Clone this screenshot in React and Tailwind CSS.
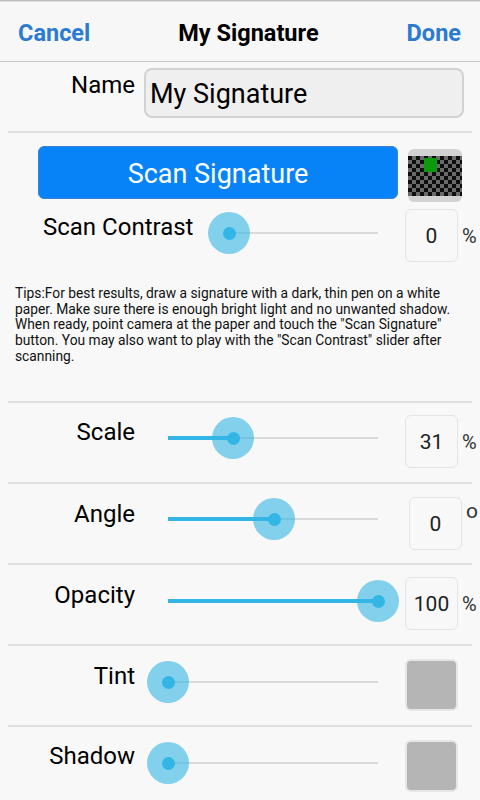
import React from "react";

function Slider({ w, value, fill, cls }) {
  const range = w - 42;
  const x = 21 + range * value;
  return (
    <div className={"relative h-[42px] shrink-0 " + cls}>
      <div className="absolute top-[20px] left-[21px] right-[21px] h-[2px] bg-[#dadada]" />
      {fill && (
        <div
          className="absolute top-[19px] left-[21px] h-[4px] bg-[#33b5e5]"
          style={{ width: x - 21 }}
        />
      )}
      <div
        className="absolute top-0 h-[42px] w-[42px] rounded-full bg-[#33b5e5]/60"
        style={{ left: x - 21 }}
      />
      <div
        className="absolute top-[14.5px] h-[13px] w-[13px] rounded-full bg-[#33b5e5]"
        style={{ left: x - 6.5 }}
      />
    </div>
  );
}

function Divider() {
  return <div className="mx-[8px] h-[2px] bg-[#e0e0e0]" />;
}

function ValueBox({ value }) {
  return (
    <div className="flex h-[53px] w-[53px] items-center justify-center rounded-[6px] border border-[#e4e4e4] pt-[1px] text-[21px] leading-none text-[#222]">
      {value}
    </div>
  );
}

function Swatch() {
  return (
    <div className="h-[52px] w-[53px] rounded-[6px] border-2 border-[#e6e6e6] bg-[#b5b5b5]" />
  );
}

function Checker() {
  return (
    <div className="ml-[10px] mt-[3px] flex h-[53px] w-[54px] flex-col justify-center rounded-[6px] bg-[#d2d2d2]">
      <svg width="54" height="40" viewBox="0 0 54 40" className="block">
        <defs>
          <pattern id="chk" width="8" height="8" patternUnits="userSpaceOnUse">
            <rect width="8" height="8" fill="#0d0d0d" />
            <rect x="4" y="0" width="4" height="4" fill="#6a6a6a" />
            <rect x="0" y="4" width="4" height="4" fill="#6a6a6a" />
          </pattern>
        </defs>
        <rect width="54" height="40" fill="url(#chk)" />
        <rect x="16" y="2" width="13" height="14" fill="#0b9a0b" />
      </svg>
    </div>
  );
}

export default function App() {
  return (
    <div className="h-[800px] w-[480px] overflow-hidden bg-[#f8f8f8] font-['Roboto',sans-serif] text-[#111]">
      {/* header */}
      <div className="h-[1px] bg-[#bcbcbc]" />
      <div className="h-[1px] bg-[#e0e0e0]" />
      <div className="flex h-[60px] items-center justify-between border-b border-[#c8c8c8] bg-[#f7f7f7] px-[18px] pt-[4px] pr-[19px] text-[23.5px] font-bold">
        <span className="text-[#2b7bd3]">Cancel</span>
        <span className="text-[23.5px] text-black">My Signature</span>
        <span className="text-[#2b7bd3]">Done</span>
      </div>

      {/* name row */}
      <div className="flex h-[69px] items-start">
        <div className="mt-[9px] w-[135px] text-right text-[24px] leading-[28px] text-black">Name</div>
        <div className="ml-[9px] mt-[6px] flex h-[50px] w-[320px] items-center rounded-[8px] border-2 border-[#d2d2d2] bg-[#efefef] pl-[4px] pt-[3px] text-[27px] leading-none text-black">
          My Signature
        </div>
      </div>
      <Divider />

      {/* scan section */}
      <div className="h-[268px] pt-[13px]">
        <div className="flex items-start">
          <div className="ml-[38px] flex h-[53px] w-[360px] items-center justify-center rounded-[6px] border border-[#3b82d4] bg-[#0883f7] pt-[3px] text-[27px] leading-none text-white">
            Scan Signature
          </div>
          <Checker />
        </div>
        <div className="mt-[7px] flex items-start">
          <div className="mt-[4px] w-[208px] pl-[43px] text-[24px] leading-[28px] text-black">Scan Contrast</div>
          <Slider cls="w-[191px] mt-[3px]" w={191} value={0} fill={false} />
          <div className="ml-[6px] flex items-center">
            <ValueBox value="0" />
            <span className="ml-[4px] text-[20px] text-[#333]">%</span>
          </div>
        </div>
        <div className="mt-[24px] whitespace-nowrap px-[15px] text-[13.8px] leading-[15.7px] text-[#111]">
          Tips:For best results, draw a signature with a dark, thin pen on a white
          <br />
          paper. Make sure there is enough bright light and no unwanted shadow.
          <br />
          When ready, point camera at the paper and touch the "Scan Signature"
          <br />
          button. You may also want to play with the "Scan Contrast" slider after
          <br />
          scanning.
        </div>
      </div>
      <Divider />

      {/* Scale */}
      <div className="flex h-[79px] items-start">
        <div className="mt-[15px] w-[135px] text-right text-[24px] leading-[28px] text-black">Scale</div>
        <Slider cls="ml-[12px] mt-[14px] w-[252px]" w={252} value={0.31} fill />
        <div className="ml-[6px] mt-[12px] flex items-center">
          <ValueBox value="31" />
          <span className="ml-[4px] text-[20px] text-[#333]">%</span>
        </div>
      </div>
      <Divider />

      {/* Angle */}
      <div className="flex h-[79px] items-start">
        <div className="mt-[16px] w-[135px] text-right text-[24px] leading-[28px] text-black">Angle</div>
        <Slider cls="ml-[12px] mt-[14px] w-[252px]" w={252} value={0.505} fill />
        <div className="ml-[10px] mt-[13px] flex items-start">
          <ValueBox value="0" />
          <span className="ml-[4px] mt-[2px] text-[21px] leading-[24px] text-[#333]">o</span>
        </div>
      </div>
      <Divider />

      {/* Opacity */}
      <div className="flex h-[79px] items-start">
        <div className="mt-[16px] w-[135px] text-right text-[24px] leading-[28px] text-black">Opacity</div>
        <Slider cls="ml-[12px] mt-[15px] w-[252px]" w={252} value={1} fill />
        <div className="ml-[6px] mt-[12px] flex items-center">
          <ValueBox value="100" />
          <span className="ml-[4px] text-[20px] text-[#333]">%</span>
        </div>
      </div>
      <Divider />

      {/* Tint */}
      <div className="flex h-[79px] items-start">
        <div className="mt-[16px] w-[135px] text-right text-[24px] leading-[28px] text-black">Tint</div>
        <Slider cls="ml-[12px] mt-[15px] w-[252px]" w={252} value={0} fill={false} />
        <div className="ml-[6px] mt-[13px]">
          <Swatch />
        </div>
      </div>
      <Divider />

      {/* Shadow */}
      <div className="flex h-[73px] items-start">
        <div className="mt-[15px] w-[135px] text-right text-[24px] leading-[28px] text-black">Shadow</div>
        <Slider cls="ml-[12px] mt-[15px] w-[252px]" w={252} value={0} fill={false} />
        <div className="ml-[6px] mt-[13px]">
          <Swatch />
        </div>
      </div>
    </div>
  );
}
